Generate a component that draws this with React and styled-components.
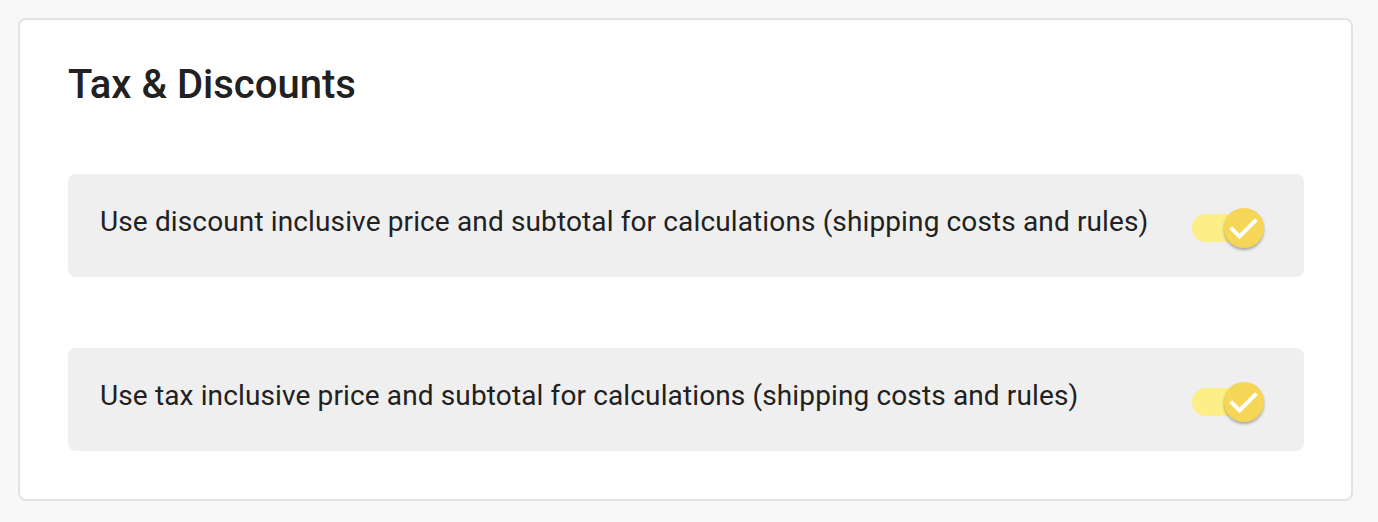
import React, { useState } from "react";
import styled, { createGlobalStyle } from "styled-components";

const GlobalStyle = createGlobalStyle`
  body {
    margin: 0;
    background: #f8f8f8;
    font-family: Roboto, "Liberation Sans", Arial, sans-serif;
    color: #212121;
  }
`;

const Page = styled.div`
  padding: 18px 25px 21px 18px;
`;

const Card = styled.section`
  background: #fff;
  border: 2px solid #e2e2e2;
  border-radius: 8px;
  padding: 41px 47px 48px 48px;
`;

const Title = styled.h2`
  margin: 0 0 65px 0;
  font-size: 40px;
  font-weight: 500;
  line-height: 48px;
  color: #212121;
`;

const List = styled.div`
  display: flex;
  flex-direction: column;
  gap: 71px;
`;

const Row = styled.div`
  display: flex;
  align-items: center;
  justify-content: space-between;
  height: 103px;
  box-sizing: border-box;
  padding: 0 40px 0 32px;
  background: #efefef;
  border-radius: 8px;
`;

const Label = styled.span`
  font-size: 28px;
  line-height: 32px;
  letter-spacing: 0.13px;
  color: #212121;
  margin-top: -8px;
`;

const Switch = styled.button`
  position: relative;
  width: 72px;
  height: 40px;
  padding: 0;
  border: none;
  background: none;
  cursor: pointer;
  margin-top: 5px;
  flex-shrink: 0;
`;

const Track = styled.span`
  position: absolute;
  left: 0;
  top: 6px;
  width: 56px;
  height: 28px;
  border-radius: 14px;
  background: ${(p) => (p.$on ? "#fdee88" : "#d6d6d6")};
`;

const Thumb = styled.span`
  position: absolute;
  top: 0;
  left: ${(p) => (p.$on ? "32px" : "0")};
  width: 40px;
  height: 40px;
  border-radius: 50%;
  background: ${(p) => (p.$on ? "#f6d656" : "#fafafa")};
  box-shadow: 0 2px 3px rgba(0, 0, 0, 0.3);
  display: flex;
  align-items: center;
  justify-content: center;
`;

const Toggle = ({ on, onChange }) => (
  <Switch type="button" role="switch" aria-checked={on} onClick={onChange}>
    <Track $on={on} />
    <Thumb $on={on}>
      {on && (
        <svg width="40" height="40" viewBox="0 0 40 40">
          <polyline
            points="8,21 15.5,28.5 31,13"
            fill="none"
            stroke="#fff"
            strokeWidth="4"
            strokeLinecap="square"
          />
        </svg>
      )}
    </Thumb>
  </Switch>
);

const settings = [
  { id: "discount", label: "Use discount inclusive price and subtotal for calculations (shipping costs and rules)" },
  { id: "tax", label: "Use tax inclusive price and subtotal for calculations (shipping costs and rules)" },
];

export default function App() {
  const [values, setValues] = useState({ discount: true, tax: true });

  return (
    <>
      <GlobalStyle />
      <Page>
        <Card>
          <Title>Tax &amp; Discounts</Title>
          <List>
            {settings.map((s) => (
              <Row key={s.id}>
                <Label>{s.label}</Label>
                <Toggle
                  on={values[s.id]}
                  onChange={() => setValues({ ...values, [s.id]: !values[s.id] })}
                />
              </Row>
            ))}
          </List>
        </Card>
      </Page>
    </>
  );
}
